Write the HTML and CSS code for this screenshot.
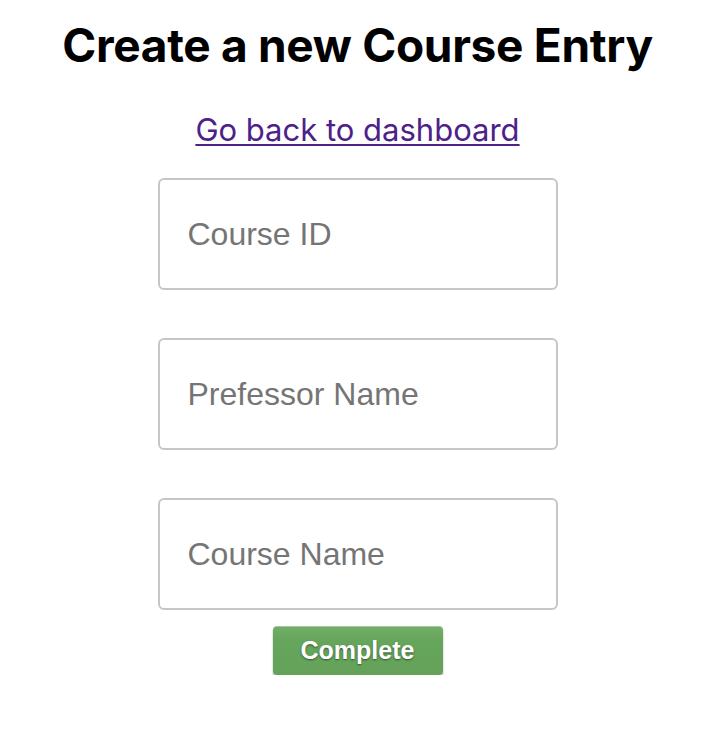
FILE: index.html
```html
<!DOCTYPE html>
<html>
<head>
<meta charset="utf-8">
<link rel="stylesheet" href="styles.css">
</head>
<body>
<main class="page">
  <h1 class="title">Create a new Course Entry</h1>
  <a class="back" href="#">Go back to dashboard</a>
  <form class="form">
    <input class="field" type="text" placeholder="Course ID">
    <input class="field" type="text" placeholder="Prefessor Name">
    <input class="field" type="text" placeholder="Course Name">
    <button class="submit" type="button">Complete</button>
  </form>
</main>
</body>
</html>
```
FILE: styles.css
```css
html, body {
  margin: 0;
  padding: 0;
  background: #fff;
}
.page {
  display: flex;
  flex-direction: column;
  align-items: center;
  padding-top: 17px;
  padding-right: 13px;
}
.title {
  font-family: Inter, "Liberation Sans", sans-serif;
  font-weight: 700;
  font-size: 46px;
  line-height: 56px;
  margin: 0;
  color: #000;
  letter-spacing: -0.3px;
}
.back {
  font-family: Inter, "Liberation Sans", sans-serif;
  font-size: 31px;
  line-height: 38px;
  color: #4e2189;
  margin-top: 38px;
  text-decoration: underline;
  text-underline-offset: 3px;
  text-decoration-thickness: 2px;
}
.form {
  display: flex;
  flex-direction: column;
  align-items: center;
  margin-top: 29px;
}
.field {
  box-sizing: border-box;
  width: 400px;
  height: 112px;
  border: 2px solid #c6c6c6;
  border-radius: 6px;
  padding: 0 28px;
  font-family: "Liberation Sans", Arial, sans-serif;
  font-size: 32px;
  color: #333;
  margin: 0 0 48px 0;
  outline: none;
  background: #fff;
}
.field::placeholder {
  color: #757575;
}
.field:last-of-type {
  margin-bottom: 16px;
}
.submit {
  box-sizing: border-box;
  width: 170px;
  height: 49px;
  border: none;
  border-radius: 4px;
  background: linear-gradient(#72ae68, #66a55c 30%, #64a25a);
  box-shadow: 0 2px 2px rgba(0,0,0,0.35), inset 0 1px 0 rgba(255,255,255,0.35);
  color: #fff;
  font-family: "Liberation Sans", Arial, sans-serif;
  font-weight: 700;
  font-size: 25px;
  text-shadow: 0 1px 2px rgba(0,0,0,0.5);
  padding: 0;
  cursor: pointer;
}
```
